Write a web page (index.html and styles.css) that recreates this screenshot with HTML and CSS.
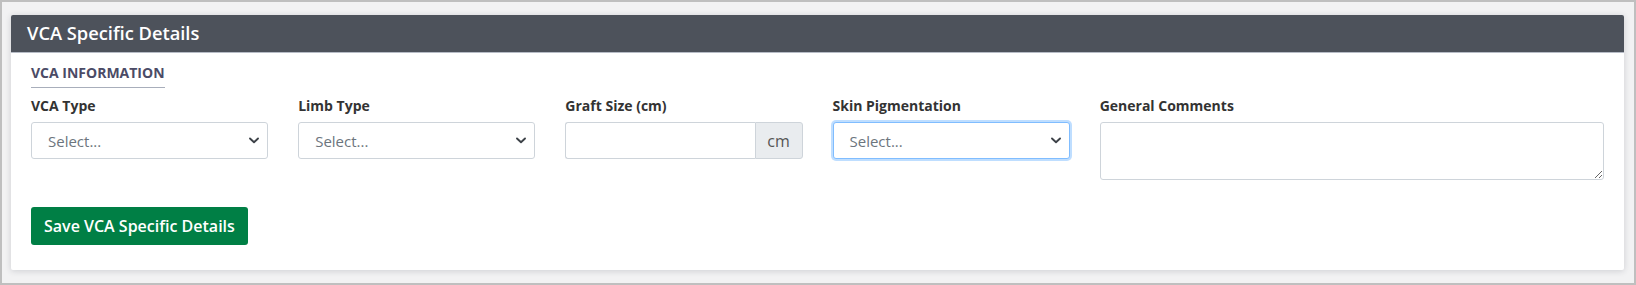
FILE: index.html
```html
<!DOCTYPE html>
<html lang="en">
<head>
<meta charset="utf-8">
<title>VCA Specific Details</title>
<link rel="stylesheet" href="styles.css">
</head>
<body>
<div class="frame">
  <section class="card">
    <header class="card-header">
      <h2 class="card-title">VCA Specific Details</h2>
    </header>
    <div class="card-body">
      <div class="section-title">VCA INFORMATION</div>
      <div class="form-grid">
        <div class="field">
          <label class="field-label">VCA Type</label>
          <div class="select">
            <span class="select-text">Select...</span>
            <svg class="chevron" width="10" height="7" viewBox="0 0 10 7"><path d="M1 1.5 L5 5.2 L9 1.5" fill="none" stroke="#3d4248" stroke-width="1.9" stroke-linecap="round" stroke-linejoin="round"/></svg>
          </div>
        </div>
        <div class="field">
          <label class="field-label">Limb Type</label>
          <div class="select">
            <span class="select-text">Select...</span>
            <svg class="chevron" width="10" height="7" viewBox="0 0 10 7"><path d="M1 1.5 L5 5.2 L9 1.5" fill="none" stroke="#3d4248" stroke-width="1.9" stroke-linecap="round" stroke-linejoin="round"/></svg>
          </div>
        </div>
        <div class="field">
          <label class="field-label">Graft Size (cm)</label>
          <div class="input-group">
            <div class="input"></div>
            <div class="addon">cm</div>
          </div>
        </div>
        <div class="field">
          <label class="field-label">Skin Pigmentation</label>
          <div class="select focused">
            <span class="select-text">Select...</span>
            <svg class="chevron" width="10" height="7" viewBox="0 0 10 7"><path d="M1 1.5 L5 5.2 L9 1.5" fill="none" stroke="#3d4248" stroke-width="1.9" stroke-linecap="round" stroke-linejoin="round"/></svg>
          </div>
        </div>
        <div class="field field-wide">
          <label class="field-label">General Comments</label>
          <textarea class="textarea" rows="2"></textarea>
        </div>
      </div>
      <button class="btn-save" type="button">Save VCA Specific Details</button>
    </div>
  </section>
</div>
</body>
</html>
```

FILE: styles.css
```css
* { box-sizing: border-box; }

html, body {
  margin: 0;
  padding: 0;
}

body {
  font-family: "Open Sans", "Noto Sans", Arial, sans-serif;
  color: #333;
}

.frame {
  width: 1636px;
  height: 285px;
  background: #f2f2f3;
  border: 2px solid #bfbfbf;
  padding: 13px 10px 13px 9px;
}

.card {
  background: #fff;
  border-radius: 2px;
  box-shadow: 0 1px 6px rgba(40, 45, 60, 0.18);
  height: 255px;
  overflow: hidden;
}

.card-header {
  height: 38px;
  background: #4d525b;
  border-bottom: 1px solid #b7bcc6;
  display: flex;
  align-items: center;
  padding-left: 16px;
}

.card-title {
  margin: 0;
  font-size: 18.3px;
  font-weight: 600;
  color: #fff;
  line-height: 1;
}

.card-body {
  padding: 8px 20px 24px 20px;
}

.section-title {
  display: inline-block;
  font-size: 14px;
  line-height: 18px;
  font-weight: 700;
  color: #4b4b66;
  padding-bottom: 5px;
  border-bottom: 1px solid #a8aebb;
}

.form-grid {
  display: grid;
  grid-template-columns: repeat(6, 1fr);
  column-gap: 30px;
  margin-top: 8px;
}

.field {
  display: flex;
  flex-direction: column;
}

.field-wide {
  grid-column: span 2;
}

.field-label {
  font-size: 14px;
  line-height: 20px;
  font-weight: 700;
  color: #333;
  margin-bottom: 6px;
}

.select {
  height: 37px;
  border: 1px solid #ced4da;
  border-radius: 3px;
  display: flex;
  align-items: center;
  justify-content: space-between;
  padding: 0 8px 0 16px;
  background: #fff;
}

.select.focused {
  border-color: #80bdff;
  box-shadow: 0 0 0 2px rgba(0, 123, 255, 0.25);
}

.select-text {
  font-size: 15px;
  color: #6c757d;
}

.input-group {
  display: flex;
  height: 37px;
}

.input {
  flex: 1;
  border: 1px solid #ced4da;
  border-right: none;
  border-radius: 3px 0 0 3px;
  background: #fff;
}

.addon {
  width: 48px;
  border: 1px solid #ced4da;
  border-radius: 0 3px 3px 0;
  background: #e9ecef;
  display: flex;
  align-items: center;
  justify-content: center;
  font-size: 16px;
  color: #555;
}

.textarea {
  height: 58px;
  border: 1px solid #ced4da;
  border-radius: 3px;
  resize: vertical;
  font-family: inherit;
  margin: 0;
}

.btn-save {
  display: block;
  margin-top: 27px;
  height: 38px;
  padding: 0 13px;
  background: #007f45;
  border: none;
  border-radius: 3px;
  color: #fff;
  font-family: inherit;
  font-size: 16px;
  font-weight: 600;
}
```
